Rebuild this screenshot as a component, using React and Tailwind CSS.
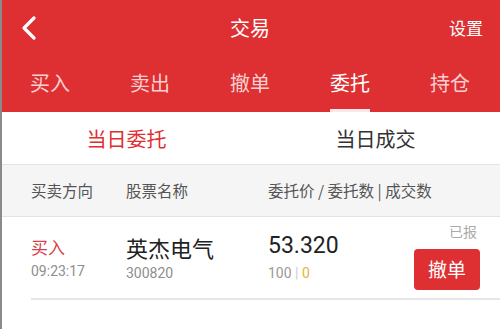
import React, { useState } from 'react';

const tabs = ['买入', '卖出', '撤单', '委托', '持仓'];

export default function App() {
    const [active, setActive] = useState(3);
    const [sub, setSub] = useState(0);

    return (
        <div
            className="w-[500px] h-[329px] bg-white overflow-hidden border-l-2 border-[#8a8a8a]"
            style={{ fontFamily: '"Noto Sans CJK SC", Roboto, "Noto Sans", sans-serif' }}
        >
            <div className="bg-[#de2f32] text-white -ml-[2px]">
                <div className="h-[55px] flex items-center justify-between px-[18px] relative">
                    <svg width="20" height="26" viewBox="0 0 20 26" className="ml-[1px]">
                        <path d="M15 3 L5 13 L15 23" fill="none" stroke="white" strokeWidth="3.2" strokeLinecap="round" strokeLinejoin="round" />
                    </svg>
                    <span className="absolute left-1/2 -translate-x-1/2 text-[20px]">交易</span>
                    <span className="text-[17px] mr-[-1px]">设置</span>
                </div>
                <div className="h-[57px] grid grid-cols-5">
                    {tabs.map((t, i) => (
                        <button
                            key={t}
                            onClick={() => setActive(i)}
                            className={`relative flex items-center justify-center text-[20px] pb-[1px] ${i === active ? 'text-white' : 'text-[#f8d0d0]'}`}
                        >
                            {t}
                            {i === active && (
                                <span className="absolute bottom-0 left-1/2 -translate-x-1/2 w-[40px] h-[3px] bg-[#fce8e8]" />
                            )}
                        </button>
                    ))}
                </div>
            </div>

            <div className="h-[53px] grid grid-cols-2 border-b border-[#e3e3e3]">
                {['当日委托', '当日成交'].map((t, i) => (
                    <button
                        key={t}
                        onClick={() => setSub(i)}
                        className={`flex items-center justify-center text-[20px] pt-[2px] ${i === sub ? 'text-[#de2f32]' : 'text-[#333333]'}`}
                    >
                        {t}
                    </button>
                ))}
            </div>

            <div className="h-[52px] bg-[#f5f5f5] border-b border-[#e3e3e3] flex items-center text-[15.5px] text-[#555555]">
                <span className="w-[124px] pl-[29px]">买卖方向</span>
                <span className="w-[142px]">股票名称</span>
                <span>委托价 / 委托数 | 成交数</span>
            </div>

            <div className="ml-[29px] h-[83px] border-b-2 border-[#e6e6e6] flex items-center relative">
                <div className="w-[95px] flex flex-col pt-[2px]">
                    <span className="text-[17px] text-[#d6404a] leading-[24px]">买入</span>
                    <span className="text-[14px] text-[#8e8e8e] leading-[24px]" style={{ fontFamily: 'Roboto, sans-serif' }}>09:23:17</span>
                </div>
                <div className="w-[142px] flex flex-col">
                    <span className="text-[22px] text-[#222222] leading-[30px]">英杰电气</span>
                    <span className="text-[14px] text-[#8e8e8e] leading-[22px]" style={{ fontFamily: 'Roboto, sans-serif' }}>300820</span>
                </div>
                <div className="flex flex-col" style={{ fontFamily: 'Roboto, sans-serif' }}>
                    <span className="text-[23px] text-[#222222] leading-[30px]">53.320</span>
                    <span className="text-[14px] text-[#999999] leading-[24px]">
                        100 <span className="text-[#cccccc]">|</span> <span className="text-[#e8b23a]">0</span>
                    </span>
                </div>
                <div className="ml-auto mr-[20px] flex flex-col items-end">
                    <span className="text-[14px] text-[#aaaaaa] mr-[3px] leading-[20px] -mt-[4px]">已报</span>
                    <button className="mt-[8px] w-[66px] h-[41px] rounded-[4px] bg-[#de2f32] text-white text-[19px] flex items-center justify-center">
                        撤单
                    </button>
                </div>
            </div>
        </div>
    );
}
